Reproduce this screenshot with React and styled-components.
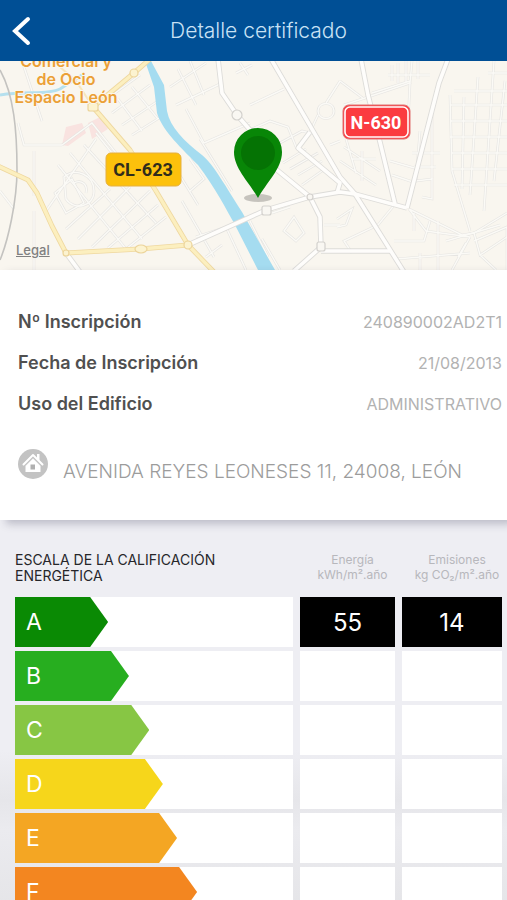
import React from "react";
import styled, { createGlobalStyle } from "styled-components";

const GlobalStyle = createGlobalStyle`
  * {
    box-sizing: border-box;
  }
  body {
    margin: 0;
    font-family: Inter, "Liberation Sans", sans-serif;
    background: #eeeef3;
  }
`;

const ScreenStyled = styled.div`
  height: 100vh;
  display: flex;
  flex-direction: column;
`;

const HeaderStyled = styled.header`
  flex: none;
  display: grid;
  grid-template-columns: 44px 1fr 44px;
  align-items: center;
  height: 61px;
  padding: 0 6px 0 0;
  background: #004f95;
`;

const BackButton = styled.button`
  display: flex;
  align-items: center;
  height: 44px;
  padding: 0 0 0 11px;
  border: 0;
  background: none;
  cursor: pointer;
`;

const HeaderTitle = styled.h1`
  margin: 0;
  padding-left: 16px;
  font-size: 21px;
  line-height: 28px;
  font-weight: 300;
  text-align: center;
  color: #c9e2f5;
`;

const ContentStyled = styled.main`
  flex: 1;
  min-height: 0;
  overflow-y: auto;
  scrollbar-width: none;
`;

const MapStyled = styled.section`
  position: relative;
  height: 209px;
  background: #f8f5ee;
  svg {
    display: block;
    width: 100%;
    height: 100%;
  }
`;

const LegalLink = styled.a`
  position: absolute;
  left: 16px;
  bottom: 12px;
  font-size: 13px;
  line-height: 16px;
  font-weight: 500;
  color: #808080;
`;

const CardStyled = styled.section`
  position: relative;
  padding: 31px 5px 36px 18px;
  background: #fff;
  box-shadow: 6px 4px 8px rgba(60, 60, 90, 0.28);
`;

const DetailList = styled.dl`
  margin: 0;
`;

const DetailRow = styled.div`
  display: flex;
  align-items: center;
  justify-content: space-between;
  height: 41px;
  dt {
    font-size: 18px;
    font-weight: 600;
    color: #505050;
  }
  dd {
    margin: 0;
    font-size: 16px;
    color: #b2b2b2;
  }
`;

const AddressStyled = styled.address`
  display: flex;
  align-items: flex-start;
  gap: 15px;
  margin-top: 25px;
  font-style: normal;
  font-size: 19px;
  line-height: 24px;
  font-weight: 300;
  color: #9c9c9c;
  svg {
    flex: none;
  }
  span {
    padding-top: 11px;
  }
`;

const ScaleStyled = styled.section`
  padding: 32px 5px 4px 15px;
  background: linear-gradient(
    #eeeef3 0,
    #eeeef3 230px,
    #e6e6ea 280px,
    #ebebef 310px,
    #e4e4e7 100%
  );
`;

const ScaleTable = styled.table`
  display: block;
  thead,
  tbody {
    display: grid;
    gap: 4px;
  }
  tr {
    display: grid;
    grid-template-columns: 278fr 95fr 100fr;
    gap: 7px;
  }
  th,
  td {
    padding: 0;
  }
`;

const ScaleTitle = styled.th`
  height: 45px;
  font-size: 14px;
  line-height: 16px;
  font-weight: 400;
  text-align: left;
  color: #26262a;
`;

const UnitTitle = styled.th`
  && {
    padding-left: 10px;
  }
  white-space: nowrap;
  display: flex;
  flex-direction: column;
  align-items: center;
  font-size: 12px;
  line-height: 15px;
  font-weight: 400;
  color: #b7b7bc;
`;

const GradeCell = styled.th`
  height: 50px;
  background: #fff;
  text-align: left;
`;

const GradeArrow = styled.div`
  display: flex;
  align-items: center;
  height: 100%;
  padding-left: 11px;
  font-size: 23px;
  font-weight: 400;
  color: #fff;
  background: ${(props) => props.$color};
  clip-path: polygon(0 0, calc(100% - 18px) 0, 100% 50%, calc(100% - 18px) 100%, 0 100%);
`;

const ValueCell = styled.td`
  display: flex;
  align-items: center;
  justify-content: center;
  height: 50px;
  font-size: 24px;
  color: #fff;
  background: ${(props) => (props.$active ? "#000" : "#fff")};
`;

const details = [
  { label: "Nº Inscripción", value: "240890002AD2T1" },
  { label: "Fecha de Inscripción", value: "21/08/2013" },
  { label: "Uso del Edificio", value: "ADMINISTRATIVO" },
];

// width is the share of the first column, in percent
const grades = [
  { letter: "A", color: "#0a8a04", width: 33.5, energy: "55", emissions: "14" },
  { letter: "B", color: "#27ae1f", width: 41 },
  { letter: "C", color: "#87c644", width: 48.3 },
  { letter: "D", color: "#f6d61b", width: 53.2 },
  { letter: "E", color: "#f4a623", width: 58.3 },
  { letter: "F", color: "#f38620", width: 65.5 },
];

const minorStreets = [
  "M22 0 L42 60 M18 62 L24 84 L62 84 M0 130 L14 148 M34 90 V135 M34 150 V209",
  "M46 150 L96 78 M62 84 L92 62 L116 92 M55 132 L72 118 L84 142 L66 152 Z",
  "M58 104 L126 188 M70 92 L142 178 M84 84 L156 162 M96 72 L112 92",
  "M66 168 L110 128 M78 178 L130 126 M92 186 L150 130 M108 187 L158 144 M126 188 L166 156",
  "M64 116 C76 106 94 114 94 130 C94 146 74 150 66 138 Z M74 122 C82 118 88 124 86 132",
  "M104 40 L140 14 M112 52 L150 24 M122 64 L158 40 M132 74 L164 54 M118 38 L142 70 M132 26 L158 58",
  "M170 26 L206 2 M176 44 L222 22 M178 8 L196 44 M190 0 L204 34 M186 48 L204 82 M204 82 L250 62 M200 78 L232 130",
  "M236 12 L252 4 M240 2 L248 14 M250 44 L284 28 M252 68 L270 60 L288 66 L296 86 M280 82 L302 70 L310 72",
  "M318 50 C318 40 334 40 334 50 C334 60 318 60 318 50 M326 42 L340 20 M310 71 L318 54",
  "M283 102 L306 88 M290 108 L318 92 M298 114 L322 100 M302 124 L322 110 M330 84 L340 80",
  "M190 98 L204 118 L190 130 M176 108 L198 144 M182 140 L214 196 M196 176 L226 166 L246 209 M206 196 L222 184",
  "M284 170 L294 156 L304 172 L296 180 Z M272 152 L290 146 M262 178 L280 209 M250 160 L268 196 M324 164 H340",
  "M340 20 L364 38 M344 44 L410 22 L412 0 M372 32 L410 20 M388 14 H430 M392 4 V20 M398 2 V22 M406 0 V22",
  "M410 22 L408 62 M418 0 V18 M454 30 H507 M450 44 H507 M450 60 H507 M450 76 H507 M452 92 H507 M452 108 H507 M454 124 H507",
  "M450 34 L452 110 L470 170 M464 36 L462 128 M478 16 L470 134 M494 0 L484 150 M505 20 L494 120 M488 12 H507",
  "M344 86 L380 110 M340 100 L376 124 M346 78 L356 112 M352 98 H376 M362 90 V120 M390 100 L418 108 M392 114 L416 122",
  "M420 70 L416 120 L432 118 V138 L422 136 M432 48 L432 118 M412 92 H440 M414 106 H436",
  "M409 148 L462 174 L474 172 L507 152 M396 142 L378 164 L344 180 L352 192 M409 148 L426 170 L470 176 M414 152 V170",
  "M337 158 L352 148 L346 164 L337 166 M430 160 L424 180 H394 M438 160 V209 M474 172 L480 194 L507 176 M480 194 L496 209",
  "M396 198 L470 192 M420 192 V209 M446 180 L500 164 M458 196 L466 182 M470 176 L452 209 M474 180 L507 166 V209",
];

const yellowRoads = [
  "M150 -2 L134 12 L93 46 L130 89 L156 130 L188 184 L214 211",
  "M-2 105 L28 119 L37 132 L52 165 L66 192 L140 188 L188 184",
];

const whiteRoads = [
  "M188 184 L266 149 L310 136 L340 131 L355 133 L407 147",
  "M448 -2 L439 22 L407 147",
  "M361 -2 L368 34 L380 81 L395 143",
  "M271 -2 L340 116 L355 133 L404 211",
  "M218 -2 L222 32 L237 54 L250 69 L277 109 L310 136 L320 156 L321 186 L294 210",
  "M310 71 L298 87 L340 122 L337 132",
  "M321 190 H390",
  "M66 192 L80 211",
];

const CityMap = () => (
  <svg viewBox="0 0 507 209" preserveAspectRatio="xMidYMid slice" role="img" aria-label="Mapa de León">
    <rect width="507" height="209" fill="#f9f6ef" />
    <path d="M66 66 L82 62 L86 72 L68 85 L62 84 Z M88 62 L100 56 L108 68 L92 78 Z" fill="#f9e3e0" />
    <g fill="none" stroke="#e6e5e2" strokeWidth="2.6">
      {minorStreets.map((d) => (
        <path key={d} d={d} />
      ))}
    </g>
    <g fill="none" stroke="#fbfaf6" strokeWidth="1.4">
      {minorStreets.map((d) => (
        <path key={d} d={d} />
      ))}
    </g>
    <path d="M0 34 C28 30 48 34 60 28 L82 14" fill="none" stroke="#b5e0ee" strokeWidth="3" />
    <path d="M0 9 C14 34 17 70 17 109 C17 140 8 180 0 199" fill="none" stroke="#c4c3c0" strokeWidth="1.6" />
    <path
      d="M145 0 L154 26 L157 52 C162 68 176 82 198 104 C216 128 226 148 234 162 L258 209 H275 L242 151 C226 126 214 104 202 94 C184 80 170 66 167 50 L164 24 L151 0 Z"
      fill="#a5dcf0"
    />
    <g fill="none" stroke="#dddcd9" strokeWidth="5.4" strokeLinejoin="round">
      {whiteRoads.map((d) => (
        <path key={d} d={d} />
      ))}
    </g>
    <g fill="none" stroke="#fefdfb" strokeWidth="3.6" strokeLinejoin="round">
      {whiteRoads.map((d) => (
        <path key={d} d={d} />
      ))}
    </g>
    <path d="M93 46 L76 20 L60 6" fill="none" stroke="#f7e6bd" strokeWidth="2" />
    <g fill="none" stroke="#efd8a0" strokeWidth="5" strokeLinejoin="round">
      {yellowRoads.map((d) => (
        <path key={d} d={d} />
      ))}
    </g>
    <g fill="none" stroke="#fcefbf" strokeWidth="3.4" strokeLinejoin="round">
      {yellowRoads.map((d) => (
        <path key={d} d={d} />
      ))}
    </g>
    <g fill="#fcf3d0" stroke="#ecd49a" strokeWidth="1.2">
      <rect x="88" y="42" width="10" height="8" rx="2" />
      <circle cx="134" cy="12" r="4" />
      <circle cx="188" cy="184" r="4" />
      <circle cx="66" cy="192" r="3" />
      <ellipse cx="141" cy="188" rx="6" ry="4" />
    </g>
    <g fill="#f9f7f2" stroke="#d3d1cd" strokeWidth="1.2">
      <circle cx="237" cy="54" r="5" />
      <rect x="262" y="145" width="9" height="9" rx="2" />
      <circle cx="310" cy="136" r="3" />
      <rect x="317" y="181" width="8" height="9" rx="2" />
    </g>
    <g
      fill="#eba037"
      stroke="#fbf7ee"
      strokeWidth="2"
      paintOrder="stroke"
      fontSize="16"
      fontWeight="600"
      textAnchor="middle"
    >
      <text x="66" y="6">Comercial y</text>
      <text x="66" y="24">de Ocio</text>
      <text x="66" y="42">Espacio León</text>
    </g>
    <g fontFamily="Roboto, sans-serif" fontWeight="700" fontSize="18" textAnchor="middle">
      <rect x="106" y="92" width="75" height="33" rx="5" fill="#fdc10c" stroke="#e5b041" />
      <text x="143" y="115" fill="#2f2c1c">CL-623</text>
      <rect x="343" y="44" width="67" height="34" rx="6" fill="#fb3c40" stroke="#df7272" />
      <rect x="345" y="46" width="63" height="30" rx="5" fill="none" stroke="#fff" strokeWidth="1.6" />
      <text x="376" y="68" fill="#fff">N-630</text>
    </g>
    <ellipse cx="258" cy="137" rx="14" ry="4" fill="#b9b6b0" opacity="0.8" />
    <path d="M258 137 C250 122 234 108 234 91 A24 24 0 0 1 282 91 C282 108 266 122 258 137 Z" fill="#088607" />
    <circle cx="258" cy="92" r="17" fill="#057304" />
  </svg>
);

const HomeIcon = () => (
  <svg width="30" height="30" viewBox="0 0 30 30" aria-hidden="true">
    <circle cx="15" cy="15" r="15" fill="#c3c3c3" />
    <path d="M5.5 15.5 L15 6 L24.5 15.5" fill="none" stroke="#fff" strokeWidth="2" strokeLinecap="round" strokeLinejoin="round" />
    <path d="M19 5 H21.5 V12 L19 9.5 Z" fill="#fff" />
    <path d="M7.5 17 L15 9.5 L22.5 17 V23 H7.5 Z" fill="#fff" />
    <path d="M7 17 L15 9 L23 17" fill="none" stroke="#d2d2d2" strokeWidth="0.8" />
    <rect x="12.5" y="15.5" width="4.5" height="5" fill="#b0b0b0" />
  </svg>
);

const App = () => {
  return (
    <>
      <GlobalStyle />
      <ScreenStyled>
        <HeaderStyled>
          <BackButton type="button" aria-label="Volver">
            <svg width="20" height="30" viewBox="0 0 20 30" fill="none">
              <path d="M17 3 L4 15 L17 27" stroke="#fff" strokeWidth="4" strokeLinecap="round" />
            </svg>
          </BackButton>
          <HeaderTitle>Detalle certificado</HeaderTitle>
        </HeaderStyled>
        <ContentStyled>
          <MapStyled>
            <CityMap />
            <LegalLink href="#legal">Legal</LegalLink>
          </MapStyled>
          <CardStyled>
            <DetailList>
              {details.map((item) => (
                <DetailRow key={item.label}>
                  <dt>{item.label}</dt>
                  <dd>{item.value}</dd>
                </DetailRow>
              ))}
            </DetailList>
            <AddressStyled>
              <HomeIcon />
              <span>AVENIDA REYES LEONESES 11, 24008, LEÓN</span>
            </AddressStyled>
          </CardStyled>
          <ScaleStyled>
            <ScaleTable>
              <thead>
                <tr>
                  <ScaleTitle scope="col">
                    ESCALA DE LA CALIFICACIÓN
                    <br />
                    ENERGÉTICA
                  </ScaleTitle>
                  <UnitTitle scope="col">
                    <span>Energía</span>
                    <span>kWh/m².año</span>
                  </UnitTitle>
                  <UnitTitle scope="col">
                    <span>Emisiones</span>
                    <span>kg CO₂/m².año</span>
                  </UnitTitle>
                </tr>
              </thead>
              <tbody>
                {grades.map((grade) => (
                  <tr key={grade.letter}>
                    <GradeCell scope="row">
                      <GradeArrow $color={grade.color} style={{ width: `${grade.width}%` }}>
                        {grade.letter}
                      </GradeArrow>
                    </GradeCell>
                    <ValueCell $active={!!grade.energy}>{grade.energy}</ValueCell>
                    <ValueCell $active={!!grade.emissions}>{grade.emissions}</ValueCell>
                  </tr>
                ))}
              </tbody>
            </ScaleTable>
          </ScaleStyled>
        </ContentStyled>
      </ScreenStyled>
    </>
  );
};

export default App;
